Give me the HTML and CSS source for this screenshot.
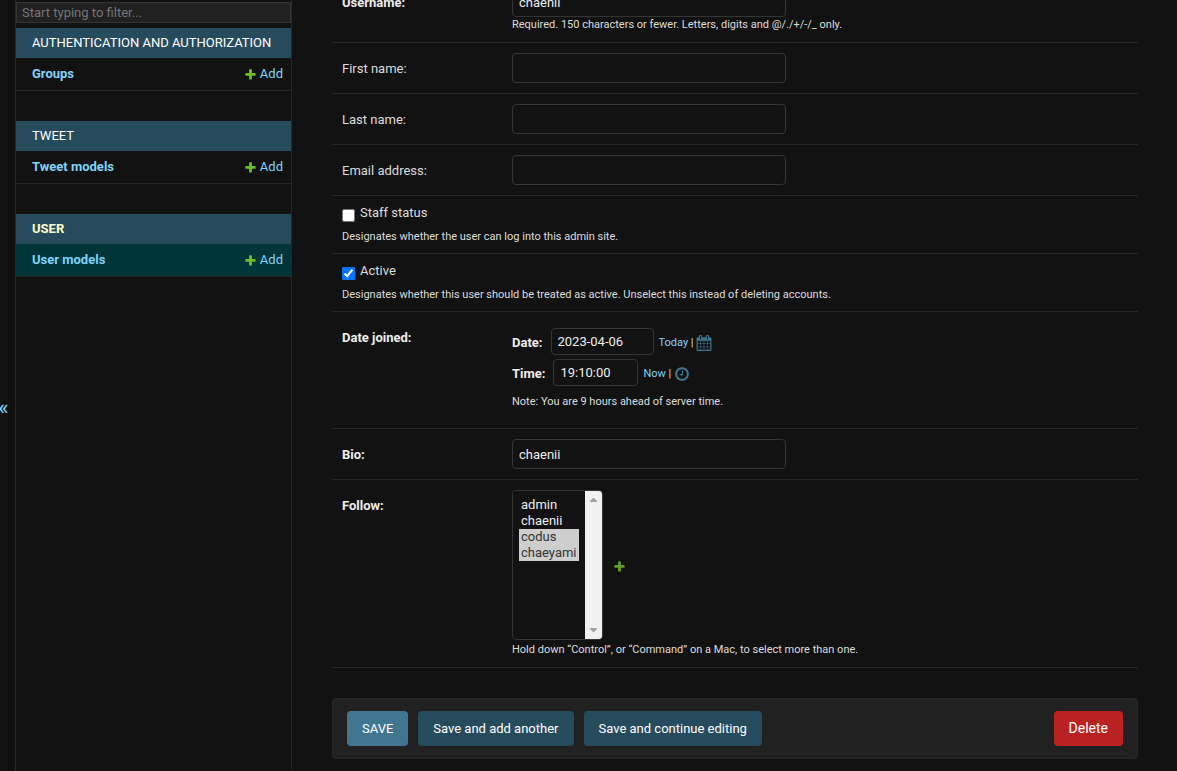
FILE: index.html
```html
<!DOCTYPE html>
<html lang="en">
<head>
<meta charset="utf-8">
<title>Change user model</title>
<link rel="stylesheet" href="styles.css">
</head>
<body>
<svg class="sprite" aria-hidden="true">
  <symbol id="plus" viewBox="0 0 1792 1792"><path d="M1600 796v192q0 40-28 68t-68 28h-416v416q0 40-28 68t-68 28h-192q-40 0-68-28t-28-68v-416h-416q-40 0-68-28t-28-68v-192q0-40 28-68t68-28h416v-416q0-40 28-68t68-28h192q40 0 68 28t28 68v416h416q40 0 68 28t28 68z"/></symbol>
  <symbol id="calendar" viewBox="0 0 1792 1792"><path d="M192 1664h288v-288h-288v288zm352 0h320v-288h-320v288zm-352-352h288v-320h-288v320zm352 0h320v-320h-320v320zm-352-384h288v-288h-288v288zm736 736h320v-288h-320v288zm-384-736h320v-288h-320v288zm768 736h288v-288h-288v288zm-384-352h320v-320h-320v320zm-352-864v-288q0-13-9.5-22.5t-22.5-9.5h-64q-13 0-22.5 9.5t-9.5 22.5v288q0 13 9.5 22.5t22.5 9.5h64q13 0 22.5-9.5t9.5-22.5zm736 864h288v-320h-288v320zm-384-384h320v-288h-320v288zm384 0h288v-288h-288v288zm32-480v-288q0-13-9.5-22.5t-22.5-9.5h-64q-13 0-22.5 9.5t-9.5 22.5v288q0 13 9.5 22.5t22.5 9.5h64q13 0 22.5-9.5t9.5-22.5zm384-64v1280q0 52-38 90t-90 38h-1408q-52 0-90-38t-38-90v-1280q0-52 38-90t90-38h128v-96q0-66 47-113t113-47h64q66 0 113 47t47 113v96h384v-96q0-66 47-113t113-47h64q66 0 113 47t47 113v96h128q52 0 90 38t38 90z"/></symbol>
  <symbol id="clock" viewBox="0 0 1792 1792"><path d="M1024 544v448q0 14-9 23t-23 9h-320q-14 0-23-9t-9-23v-64q0-14 9-23t23-9h224v-352q0-14 9-23t23-9h64q14 0 23 9t9 23zm416 352q0-148-73-273t-198-198-273-73-273 73-198 198-73 273 73 273 198 198 273 73 273-73 198-198 73-273zm224 0q0 209-103 385.5t-279.5 279.5-385.5 103-385.5-103-279.5-279.5-103-385.5 103-385.5 279.5-279.5 385.5-103 385.5 103 279.5 279.5 103 385.5z"/></symbol>
</svg>
<div class="page">
  <button class="nav-toggle" type="button" aria-label="Toggle navigation">«</button>
  <nav class="sidebar">
    <input class="nav-filter" type="search" placeholder="Start typing to filter..." aria-label="Filter navigation items">
    <table class="app">
      <caption><a href="#">Authentication and Authorization</a></caption>
      <tr><th scope="row"><a href="#">Groups</a></th><td><a class="add" href="#"><svg class="icon-add"><use href="#plus"/></svg>Add</a></td></tr>
    </table>
    <table class="app">
      <caption><a href="#">Tweet</a></caption>
      <tr><th scope="row"><a href="#">Tweet models</a></th><td><a class="add" href="#"><svg class="icon-add"><use href="#plus"/></svg>Add</a></td></tr>
    </table>
    <table class="app current">
      <caption><a href="#">User</a></caption>
      <tr><th scope="row"><a href="#">User models</a></th><td><a class="add" href="#"><svg class="icon-add"><use href="#plus"/></svg>Add</a></td></tr>
    </table>
  </nav>
  <main class="content">
    <form>
      <div class="row">
        <label class="name required" for="username">Username:</label>
        <div class="field">
          <input class="text" id="username" type="text" value="chaenii">
          <p class="help">Required. 150 characters or fewer. Letters, digits and @/./+/-/_ only.</p>
        </div>
      </div>
      <div class="row">
        <label class="name" for="first">First name:</label>
        <div class="field"><input class="text" id="first" type="text"></div>
      </div>
      <div class="row">
        <label class="name" for="last">Last name:</label>
        <div class="field"><input class="text" id="last" type="text"></div>
      </div>
      <div class="row">
        <label class="name" for="email">Email address:</label>
        <div class="field"><input class="text" id="email" type="email"></div>
      </div>
      <div class="row check-row">
        <div class="check"><input id="staff" type="checkbox"><label for="staff">Staff status</label></div>
        <p class="help">Designates whether the user can log into this admin site.</p>
      </div>
      <div class="row check-row">
        <div class="check"><input id="active" type="checkbox" checked><label for="active">Active</label></div>
        <p class="help">Designates whether this user should be treated as active. Unselect this instead of deleting accounts.</p>
      </div>
      <div class="row">
        <span class="name required">Date joined:</span>
        <div class="field datetime">
          <div class="stamp">
            <label for="date">Date:</label>
            <input class="date" id="date" type="text" value="2023-04-06">
            <span class="shortcuts"><a href="#">Today</a> |</span>
            <a class="picker" href="#" aria-label="Choose a date"><svg><use href="#calendar"/></svg></a>
          </div>
          <div class="stamp">
            <label for="time">Time:</label>
            <input class="time" id="time" type="text" value="19:10:00">
            <span class="shortcuts"><a href="#">Now</a> |</span>
            <a class="picker clock" href="#" aria-label="Choose a time"><svg><use href="#clock"/></svg></a>
          </div>
          <p class="note">Note: You are 9 hours ahead of server time.</p>
        </div>
      </div>
      <div class="row">
        <label class="name required" for="bio">Bio:</label>
        <div class="field"><input class="text" id="bio" type="text" value="chaenii"></div>
      </div>
      <div class="row">
        <label class="name required" for="follow">Follow:</label>
        <div class="field">
          <div class="related">
            <div class="listbox">
              <select id="follow" multiple>
                <option>admin</option>
                <option>chaenii</option>
                <option selected>codus</option>
                <option selected>chaeyami</option>
              </select>
              <div class="scrollbar" aria-hidden="true">
                <svg viewBox="0 0 7 4"><path d="M0 4V3L3 0H4L7 3V4Z"/></svg>
                <svg viewBox="0 0 7 4"><path d="M0 0V1L3 4H4L7 1V0Z"/></svg>
              </div>
            </div>
            <a class="add-related" href="#" aria-label="Add another"><svg class="icon-add"><use href="#plus"/></svg></a>
          </div>
          <p class="help">Hold down “Control”, or “Command” on a Mac, to select more than one.</p>
        </div>
      </div>
      <div class="submit-row">
        <button class="save" type="submit">SAVE</button>
        <button type="submit">Save and add another</button>
        <button type="submit">Save and continue editing</button>
        <a class="delete" href="#">Delete</a>
      </div>
    </form>
  </main>
</div>
</body>
</html>
```
FILE: styles.css
```css
* { box-sizing: border-box; }

body {
  margin: 0;
  background: #121212;
  color: #eee;
  font-family: Roboto, "Liberation Sans", sans-serif;
  font-size: 13px;
  line-height: 20px;
  overflow: hidden;
}

a { color: #81d4fa; text-decoration: none; }
p { margin: 0; }
input, select, button { font-family: inherit; color: inherit; }

.sprite { display: none; }

.page { display: flex; min-height: 100vh; }

/* Sidebar */
.nav-toggle {
  flex: none;
  width: 24px;
  margin: 0 0 0 -8px;
  padding: 44px 0 0;
  border: 0;
  border-right: 1px solid #272727;
  background: none;
  color: #81d4fa;
  font-size: 22px;
}

.sidebar {
  flex: none;
  width: 276px;
  padding-top: 2px;
  border-right: 1px solid #272727;
}

.nav-filter {
  display: block;
  width: 100%;
  height: 21px;
  margin: 0 0 5px;
  padding: 0 5px;
  border: 1px solid #353535;
  background: #212121;
  font-size: 13px;
  appearance: none;
}
.nav-filter::placeholder { color: #757575; }

.app {
  width: 100%;
  margin-bottom: 30px;
  border-spacing: 0;
}
.app caption {
  padding: 5px 16px;
  background: #264b5d;
  text-align: left;
  text-transform: uppercase;
}
.app caption a { color: #fff; }
.app th, .app td { padding: 6px 8px 6px 16px; border-bottom: 1px solid #272727; vertical-align: top; }
.app th { text-align: left; font-weight: 700; }
.add { display: flex; align-items: center; justify-content: flex-end; gap: 3px; }
.current caption a { color: #ffc; font-weight: 700; }
.current tr { background: #00363a; }

.icon-add { width: 13px; height: 13px; fill: #70bf2b; }

/* Form */
.content { flex: 1; min-width: 0; margin-top: -23px; padding: 0 39px 12px 40px; }

.row {
  display: flex;
  padding: 10px;
  border-bottom: 1px solid #272727;
}
.name { flex: none; width: 170px; padding-top: 6px; color: #ddd; }
.required { color: #eee; font-weight: 700; }
.field { flex: 1; min-width: 0; }
.help { color: #ddd; font-size: 11px; line-height: 15px; }

.text, .date, .time {
  display: block;
  border: 1px solid #353535;
  border-radius: 4px;
  background: #121212;
  font-size: 13px;
}
.text { width: 274px; height: 30px; padding: 5px 6px; }

.check-row { flex-direction: column; gap: 8px; padding: 8px 10px; }
.check-row .help { line-height: 16px; }
.check { display: flex; gap: 5px; height: 17px; color: #ddd; line-height: 18px; }
.check input { width: 13px; height: 13px; margin: 5px 0 0; }

.datetime { padding: 6px 0 0; }
.stamp { display: flex; align-items: center; margin-bottom: 4px; }
.stamp label { margin-right: 8px; padding-top: 2px; font-weight: 700; }
.date, .time { height: 27px; padding: 3px 6px; }
.date { width: 103px; }
.time { width: 85px; }
.shortcuts { margin-left: 5px; padding-top: 3px; color: #ddd; font-size: 11px; }
.picker { margin-left: 2px; padding-top: 3px; }
.picker.clock { margin-left: 3px; }
.picker svg { display: block; width: 16px; height: 16px; fill: #417690; }
.note { padding: 2px 0 6px; color: #ddd; font-size: 11px; line-height: 20px; }

.related { display: flex; align-items: center; gap: 10px; padding-bottom: 2px; }
.listbox {
  display: flex;
  height: 150px;
  border: 1px solid #353535;
  border-radius: 4px;
  overflow: hidden;
}
.listbox select {
  width: 72px;
  height: 100%;
  padding: 6px;
  border: 0;
  background: #121212;
  font-size: 13px;
  outline: 0;
  scrollbar-width: none;
}
.listbox option:checked { color: #333; }
.scrollbar {
  display: flex;
  flex-direction: column;
  justify-content: space-between;
  align-items: center;
  width: 17px;
  padding: 7px 0;
  background: #f1f1f1;
}
.scrollbar svg { width: 7px; height: 4px; fill: #a3a3a3; }
.add-related { display: flex; padding-top: 2px; }
.add-related .icon-add { fill: #5fa225; }

.submit-row {
  display: flex;
  gap: 10px;
  margin-top: 30px;
  padding: 12px 14px;
  border: 1px solid #272727;
  border-radius: 4px;
  background: #212121;
}
.submit-row button, .delete {
  height: 35px;
  padding: 0 15px;
  border: 0;
  border-radius: 4px;
  background: #264b5d;
  color: #fff;
  font-size: 13px;
  line-height: 35px;
}
.submit-row .save { background: #417690; }
.submit-row .delete { margin-left: auto; background: #ba2121; font-size: 14px; }
```
